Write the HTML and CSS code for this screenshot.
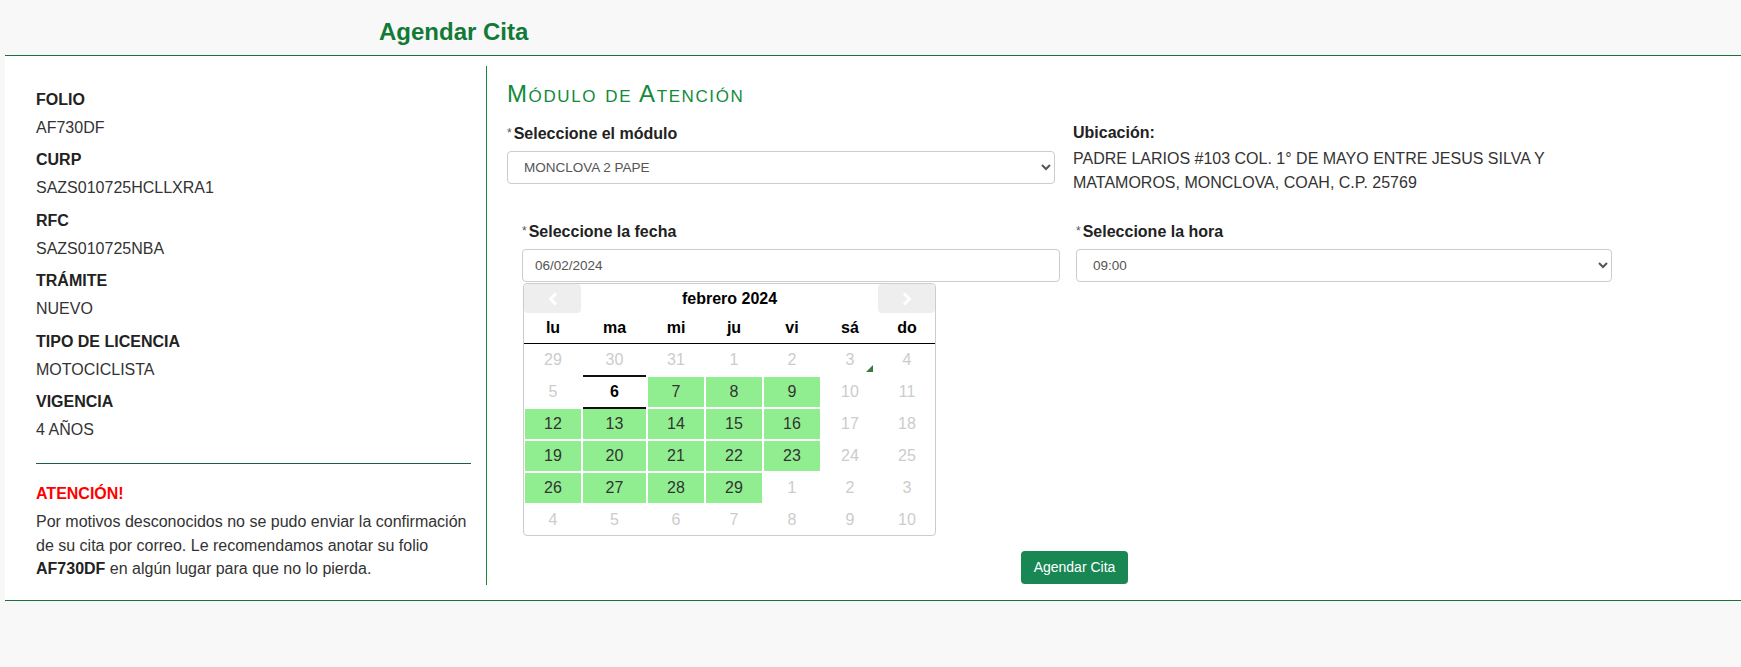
FILE: index.html
```html
<!DOCTYPE html>
<html lang="es">
<head>
<meta charset="utf-8">
<title>Agendar Cita</title>
<link rel="stylesheet" href="styles.css">
</head>
<body>
<header class="page-header"><h1 class="page-title">Agendar Cita</h1></header>
<main class="card">
  <aside class="summary">
    <dl class="info">
      <dt>FOLIO</dt><dd>AF730DF</dd>
      <dt>CURP</dt><dd>SAZS010725HCLLXRA1</dd>
      <dt>RFC</dt><dd>SAZS010725NBA</dd>
      <dt>TRÁMITE</dt><dd>NUEVO</dd>
      <dt>TIPO DE LICENCIA</dt><dd>MOTOCICLISTA</dd>
      <dt>VIGENCIA</dt><dd>4 AÑOS</dd>
    </dl>
    <hr class="sep">
    <h2 class="alert-title">ATENCIÓN!</h2>
    <p class="alert-text">Por motivos desconocidos no se pudo enviar la confirmación de su cita por correo. Le recomendamos anotar su folio <strong>AF730DF</strong> en algún lugar para que no lo pierda.</p>
  </aside>
  <section class="panel">
    <h2 class="panel-title">Módulo de Atención</h2>
    <div class="row-module">
      <div class="field">
        <label class="lbl"><span class="req">*</span>Seleccione el módulo</label>
        <select class="ctrl"><option>MONCLOVA 2 PAPE</option></select>
      </div>
      <div class="location">
        <div class="lbl lbl-loc">Ubicación:</div>
        <p class="address">PADRE LARIOS #103 COL. 1° DE MAYO ENTRE JESUS SILVA Y MATAMOROS, MONCLOVA, COAH, C.P. 25769</p>
      </div>
    </div>
    <div class="row-date">
      <div class="field">
        <label class="lbl"><span class="req">*</span>Seleccione la fecha</label>
        <input class="ctrl ctrl-input" type="text" value="06/02/2024">
        <div class="calendar">
          <div class="cal-head">
            <button class="cal-nav" type="button" aria-label="Anterior"><svg width="10" height="14" viewBox="0 0 10 14"><polyline points="8,1.5 2.5,7 8,12.5" fill="none" stroke="#fff" stroke-width="3"/></svg></button>
            <div class="cal-month">febrero 2024</div>
            <button class="cal-nav" type="button" aria-label="Siguiente"><svg width="10" height="14" viewBox="0 0 10 14"><polyline points="2,1.5 7.5,7 2,12.5" fill="none" stroke="#fff" stroke-width="3"/></svg></button>
          </div>
          <div class="cal-grid cal-dow"><span>lu</span><span>ma</span><span>mi</span><span>ju</span><span>vi</span><span>sá</span><span>do</span></div>
          <div class="cal-grid cal-days">
            <span class="day off">29</span><span class="day off">30</span><span class="day off">31</span><span class="day off">1</span><span class="day off">2</span><span class="day off today">3</span><span class="day off">4</span>
            <span class="day off">5</span><span class="day selected">6</span><span class="day on">7</span><span class="day on">8</span><span class="day on">9</span><span class="day off">10</span><span class="day off">11</span>
            <span class="day on">12</span><span class="day on">13</span><span class="day on">14</span><span class="day on">15</span><span class="day on">16</span><span class="day off">17</span><span class="day off">18</span>
            <span class="day on">19</span><span class="day on">20</span><span class="day on">21</span><span class="day on">22</span><span class="day on">23</span><span class="day off">24</span><span class="day off">25</span>
            <span class="day on">26</span><span class="day on">27</span><span class="day on">28</span><span class="day on">29</span><span class="day off">1</span><span class="day off">2</span><span class="day off">3</span>
            <span class="day off">4</span><span class="day off">5</span><span class="day off">6</span><span class="day off">7</span><span class="day off">8</span><span class="day off">9</span><span class="day off">10</span>
          </div>
        </div>
      </div>
      <div class="field">
        <label class="lbl"><span class="req">*</span>Seleccione la hora</label>
        <select class="ctrl ctrl-hour"><option>09:00</option></select>
      </div>
    </div>
    <div class="actions"><button class="btn" type="button">Agendar Cita</button></div>
  </section>
</main>
</body>
</html>
```

FILE: styles.css
```css
* { box-sizing: border-box; }
html, body { margin: 0; padding: 0; }
body {
  background: #f8f8f8;
  font-family: "Liberation Sans", Arial, sans-serif;
  font-size: 16px;
  color: #333;
}

.page-header { height: 55px; padding-top: 17px; }
.page-title {
  margin: 0 0 0 379px;
  font-size: 24px;
  line-height: 29px;
  font-weight: 700;
  color: #117a37;
}

.card {
  display: flex;
  margin-left: 5px;
  background: #fff;
  border-top: 1px solid #1f6f3f;
  border-bottom: 1px solid #1f6f3f;
}

.summary {
  flex: none;
  width: 482px;
  margin: 10px 0 15px;
  padding: 21.5px 15px 0 31px;
  border-right: 1px solid #168a3a;
}
.info { margin: 0; padding-bottom: 0.1px; }
.info dt { font-weight: 700; color: #222; line-height: 24px; margin-bottom: 4px; }
.info dd { margin: 0 0 8.6px; line-height: 24px; color: #333; }
.sep { height: 0; border: 0; border-top: 1px solid #1f5f3f; margin: 11.5px 0 18px; }
.alert-title { margin: 0 0 4.4px; font-size: 16px; line-height: 24px; font-weight: 700; color: #ff0000; }
.alert-text { margin: 0; line-height: 23.7px; color: #333; }
.alert-text strong { color: #222; }

.panel { flex: 1; min-width: 0; padding: 24px 99px 16px 20px; }
.panel-title {
  margin: 0 0 12.6px;
  font-size: 24px;
  line-height: 28.8px;
  font-weight: 400;
  font-variant: small-caps;
  letter-spacing: 1.6px;
  color: #128a3c;
}

.row-module { display: grid; grid-template-columns: 548px 1fr; column-gap: 18px; }
.lbl { display: block; font-weight: 700; line-height: 24px; margin-bottom: 5px; color: #222; }
.lbl-loc { margin-bottom: 0; }
.req { font-size: 12px; font-weight: 400; color: #555; margin-right: 2px; vertical-align: 2px; }
.address { margin: 2px 0 0; line-height: 24px; color: #333; }

.ctrl {
  display: block;
  width: 100%;
  height: 33px;
  margin: 0;
  padding: 0 12px;
  font-family: "Liberation Sans", Arial, sans-serif;
  font-size: 13.5px;
  color: #555;
  background: #fff;
  border: 1px solid #ccc;
  border-radius: 4px;
}

.row-date {
  display: grid;
  grid-template-columns: 538px 536px;
  column-gap: 16px;
  align-items: start;
  margin: 24px 0 0 15px;
}

.calendar {
  width: 413px;
  margin: 1px 0 0 1px;
  border: 1px solid #ccc;
  border-radius: 4px;
  background: #fff;
}
.cal-head { display: flex; height: 29px; }
.cal-nav {
  flex: none;
  width: 57px;
  height: 29px;
  padding: 0;
  border: 0;
  border-radius: 4px;
  background: #eee;
  display: flex;
  align-items: center;
  justify-content: center;
}
.cal-month { flex: 1; text-align: center; font-weight: 700; line-height: 29px; color: #000; }
.cal-grid {
  display: grid;
  grid-template-columns: 56px 63px 56px 56px 56px 56px 1fr;
  column-gap: 2px;
  padding: 0 1px;
  text-align: center;
}
.cal-dow { height: 31px; line-height: 30px; font-weight: 700; color: #000; border-bottom: 1px solid #000; }
.cal-days { padding-top: 1px; grid-auto-rows: 30px; row-gap: 2px; }
.day { line-height: 30px; color: #333; }
.day.off { color: #ccc; }
.day.on { background: #90ee90; }
.day.selected { font-weight: 700; color: #000; box-shadow: 0 -2px 0 #111, 0 2px 0 #111; }
.day.today { position: relative; }
.day.today::before {
  content: "";
  position: absolute;
  right: 5px;
  bottom: 3px;
  border-style: solid;
  border-color: transparent;
  border-width: 0 0 7px 7px;
  border-bottom-color: #3d7a3d;
}

.actions { margin-top: 15px; text-align: center; }
.btn {
  padding: 6px 13px;
  border: 0;
  border-radius: 4px;
  background: #198754;
  color: #fff;
  font-family: "Liberation Sans", Arial, sans-serif;
  font-size: 14px;
  line-height: 21px;
}
```
